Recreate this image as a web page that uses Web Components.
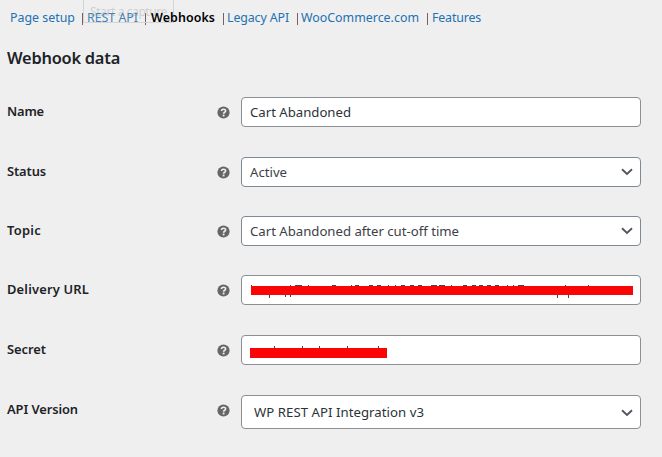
<!DOCTYPE html>
<html lang="en"><head><meta charset="utf-8"><title>Webhook data</title>
<style>
html{background:#efefef}
body{margin:0;width:662px;height:457px;overflow:hidden;background:#efefef;font-family:"Noto Sans","Open Sans",sans-serif;color:#1d2327}
</style></head><body>
<webhook-page></webhook-page>
<script>
class FitText extends HTMLElement{
  constructor(){super();this.attachShadow({mode:'open'}).innerHTML='<style>:host{display:inline-block;white-space:nowrap}span{display:inline-block}</style><span><slot></slot></span>';}
  connectedCallback(){
    const s=this.shadowRoot.querySelector('span'),w=+this.getAttribute('w');
    const n=s.getBoundingClientRect().width;
    this.style.width=w+'px';
    s.style.letterSpacing=((w-n)/this.textContent.length)+'px';
  }
}
class HelpTip extends HTMLElement{
  constructor(){super();this.attachShadow({mode:'open'}).innerHTML=`<style>:host{display:block;width:13px;height:13px}svg{display:block}</style>
  <svg width="13" height="13" viewBox="0 0 13 13"><circle cx="6.5" cy="6.5" r="6.1" fill="#666"/><path d="M4.5 5.1C4.5 2.7 8.6 2.7 8.6 4.9C8.6 6.3 6.6 6.2 6.6 7.7" fill="none" stroke="#efefef" stroke-width="1.6"/><rect x="5.7" y="8.6" width="1.8" height="1.8" fill="#efefef"/></svg>`;}
}
class FieldBox extends HTMLElement{
  constructor(){super();this.attachShadow({mode:'open'}).innerHTML=`<style>
  :host{box-sizing:border-box;display:flex;align-items:center;justify-content:space-between;width:400px;height:30px;border:1px solid #8c8f94;border-radius:4px;background:#fff;padding:0 8px;font-size:13.2px;line-height:20px;color:#2c3338;position:relative}
  :host([select]){border-color:#7e8993;color:#3c4146}
  :host([tall]){height:34px;padding-left:12px;border-color:#8c8f94;color:#2c3338}
  svg{display:none;margin-right:-1px}:host([select]) svg{display:block}
  :host([tall]) svg{margin-top:2px}
  </style><slot></slot><svg width="12" height="8" viewBox="0 0 12 8"><path d="M1 1.2L6 6L11 1.2" fill="none" stroke="#50575e" stroke-width="1.9"/></svg>`;}
}
class RedactedValue extends HTMLElement{
  connectedCallback(){
    const r=this.attachShadow({mode:'open'}),a=k=>(this.getAttribute(k)||'');
    const marks=(k,y,h)=>a(k).split(' ').filter(Boolean).map(m=>{const[x,w,l]=m.split(',');return `<rect x="${x-242}" y="${y}" width="${w}" height="${l||h}"/>`}).join('');
    r.innerHTML=`<style>:host{position:absolute;left:0;top:0}svg{display:block}</style><svg width="398" height="28" shape-rendering="crispEdges"><g fill="#414850">${marks('tops',+a('y')-(+a('rise')),+a('rise'))}${marks('tails',+a('y')+(+a('h')),3)}</g><rect x="${a('x')-242}" y="${a('y')}" width="${a('w')}" height="${a('h')}" fill="#fa0505"/></svg>`;
  }
}
class FormRow extends HTMLElement{
  constructor(){super();this.attachShadow({mode:'open'}).innerHTML=`<style>
  :host{display:grid;grid-template-columns:210px 24px 400px;align-items:center;height:30px;padding-left:7px}
  :host([tall]){height:34px}
  .l{font-size:12.9px;font-weight:600;line-height:20px;margin-top:-2px}
  :host([tall]) .l{margin-top:-6px}:host([tall]) help-tip{margin-top:-3px}
  help-tip{margin-top:1px}
  </style><div class="l"><slot name="label"></slot></div><help-tip></help-tip><slot></slot>`;}
}
class SectionNav extends HTMLElement{
  constructor(){super();this.attachShadow({mode:'open'}).innerHTML=`<style>
  :host{display:flex;height:20px;padding:8px 0 0 10px;font-size:12.4px;line-height:20px;color:#2271b1;position:relative}
  i{width:1px;height:12px;margin-top:5px;background:#765f68}
  b{font-weight:600;color:#000}
  .ghost{position:absolute;left:83px;top:-8px;width:89px;height:29px;border:1px solid #d4d4d4;color:#cfcfcf;font-size:12px;line-height:20px}
  .ghost fit-text{margin:9px 0 0 6px}
  a{position:relative}
  </style><div class="ghost"><fit-text w="77">Start a capture</fit-text></div>
  <a><fit-text w="65">Page setup</fit-text></a><i style="margin-left:7px"></i>
  <a style="margin-left:4px;opacity:.85"><fit-text w="51">REST API</fit-text></a><i style="margin-left:7px"></i>
  <a style="margin-left:5px"><b><fit-text w="64">Webhooks</fit-text></b></a><i style="margin-left:8px"></i>
  <a style="margin-left:3px"><fit-text w="62">Legacy API</fit-text></a><i style="margin-left:8px"></i>
  <a style="margin-left:3px"><fit-text w="118">WooCommerce.com</fit-text></a><i style="margin-left:8px"></i>
  <a style="margin-left:4px"><fit-text w="49">Features</fit-text></a>`;}
}
class WebhookPage extends HTMLElement{
  constructor(){super();this.attachShadow({mode:'open'}).innerHTML=`<style>
  :host{display:block}
  h2{margin:18px 0 0 7px;font-size:16.4px;line-height:24px;font-weight:600;height:24px}
  .rows{display:flex;flex-direction:column;margin-top:27px}
  form-row+form-row{margin-top:30px}
  form-row:nth-child(3),form-row:nth-child(4){margin-top:29px}
  </style><section-nav></section-nav>
  <h2><fit-text w="113">Webhook data</fit-text></h2>
  <div class="rows">
  <form-row><fit-text slot="label" w="37">Name</fit-text><field-box><fit-text w="101">Cart Abandoned</fit-text></field-box></form-row>
  <form-row><fit-text slot="label" w="39">Status</fit-text><field-box select><fit-text w="37">Active</fit-text></field-box></form-row>
  <form-row><fit-text slot="label" w="34">Topic</fit-text><field-box select><fit-text w="209">Cart Abandoned after cut-off time</fit-text></field-box></form-row>
  <form-row><fit-text slot="label" w="82">Delivery URL</fit-text><field-box><redacted-value x="251" y="10" w="382" h="9" rise="1" tops="251,1 290,1 295,7 308,1 332,4 351,1 355,4 369,4 377,4 388,1 395,1 401,4 410,4 418,4 431,6 439,6 451,1 463,4 472,4 479,4 487,4 495,4 507,1 513,1 518,6 565,1 588,1" tails="269,1,3 285,1,2 290,1,2 557,1,3 568,1,3"></redacted-value></field-box></form-row>
  <form-row><fit-text slot="label" w="39">Secret</fit-text><field-box><redacted-value x="250" y="12" w="137" h="10" rise="2" tops="274,1 302,1 319,1 347,1 378,1"></redacted-value></field-box></form-row>
  <form-row tall><fit-text slot="label" w="71">API Version</fit-text><field-box select tall><fit-text w="170">WP REST API Integration v3</fit-text></field-box></form-row>
  </div>`;}
}
customElements.define('fit-text',FitText);
customElements.define('help-tip',HelpTip);
customElements.define('redacted-value',RedactedValue);
customElements.define('field-box',FieldBox);
customElements.define('form-row',FormRow);
customElements.define('section-nav',SectionNav);
customElements.define('webhook-page',WebhookPage);
</script></body></html>
